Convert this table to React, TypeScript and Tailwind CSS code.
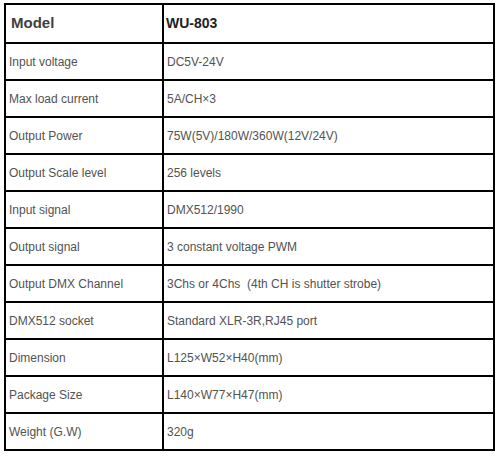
const rows: [string, string][] = [
  ["Input voltage", "DC5V-24V"],
  ["Max load current", "5A/CH×3"],
  ["Output Power", "75W(5V)/180W/360W(12V/24V)"],
  ["Output Scale level", "256 levels"],
  ["Input signal", "DMX512/1990"],
  ["Output signal", "3 constant voltage PWM"],
  ["Output DMX Channel", "3Chs or 4Chs  (4th CH is shutter strobe)"],
  ["DMX512 socket", "Standard XLR-3R,RJ45 port"],
  ["Dimension", "L125×W52×H40(mm)"],
  ["Package Size", "L140×W77×H47(mm)"],
  ["Weight (G.W)", "320g"],
];

export default function App() {
  return (
    <div className="w-[502px] h-[456px] bg-white pt-[3px] pl-[4px]">
      <div className="w-[491px] border border-black font-['Liberation_Sans',Arial,sans-serif] text-[12px] text-[#525252]">
        <div className="flex h-[39px]">
          <div className="w-[158px] border border-black flex items-center pl-[5px] text-[15px] font-bold text-[#3f3f3f]">
            Model
          </div>
          <div className="w-[331px] border border-black flex items-center pl-[2px] text-[14px] font-bold text-[#222]">
            WU-803
          </div>
        </div>
        {rows.map(([label, value]) => (
          <div key={label} className="flex h-[37px]">
            <div className="w-[158px] border border-black flex items-center pl-[3px]">
              {label}
            </div>
            <div className="w-[331px] border border-black flex items-center pl-[3px] whitespace-pre">
              {value}
            </div>
          </div>
        ))}
      </div>
    </div>
  );
}
